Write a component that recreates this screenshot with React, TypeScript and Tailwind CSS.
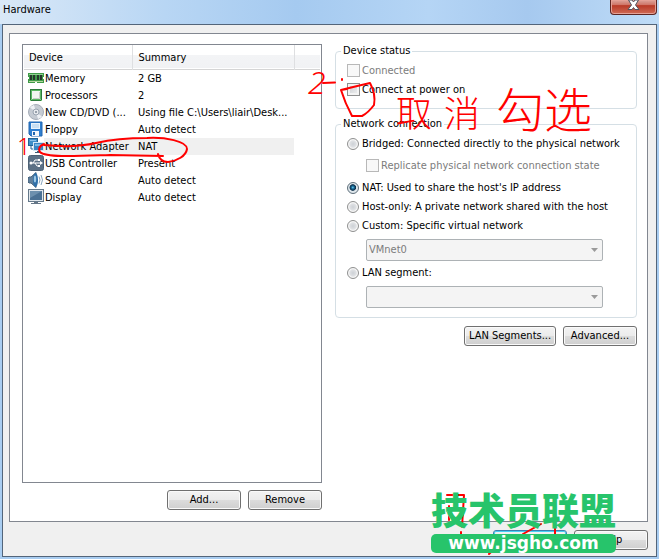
import type { ReactNode } from "react";

const devices = [
  { icon: <MemoryIcon />, name: "Memory", summary: "2 GB" },
  { icon: <ProcessorIcon />, name: "Processors", summary: "2" },
  { icon: <DiscIcon />, name: "New CD/DVD (...", summary: "Using file C:\\Users\\liair\\Desk..." },
  { icon: <FloppyIcon />, name: "Floppy", summary: "Auto detect" },
  { icon: <NetworkIcon />, name: "Network Adapter", summary: "NAT", selected: true },
  { icon: <UsbIcon />, name: "USB Controller", summary: "Present" },
  { icon: <SoundIcon />, name: "Sound Card", summary: "Auto detect" },
  { icon: <DisplayIcon />, name: "Display", summary: "Auto detect" },
];

function Icon({ children }: { children: ReactNode }) {
  return (
    <svg width="16" height="16" viewBox="0 0 16 16" className="shrink-0" aria-hidden="true">
      {children}
    </svg>
  );
}

function MemoryIcon() {
  return (
    <Icon>
      <path d="M0 3h16v10H0z" fill="#3f9a48" />
      <path d="M1 4h14v1H1z" fill="#8fd08f" />
      <path d="M2 5h2v5H2zM5 5h2v5H5zM9 5h2v5H9zM12 5h2v5h-2z" fill="#26372c" />
      <path d="M1 11h14v1H1z" fill="#b5d7a0" />
      <path d="M0 7h1v2H0zM15 7h1v2h-1zM7 12h2v1H7z" fill="#fff" />
    </Icon>
  );
}

function ProcessorIcon() {
  return (
    <Icon>
      <rect x="2.5" y="2.5" width="11" height="11" fill="#5cb866" stroke="#2c7a3c" />
      <rect x="4" y="4" width="8" height="8" fill="#f3f6f3" />
      <path d="M5 11.5h6.500V5" fill="none" stroke="#c9cfc9" />
      <path d="M2 14l2-2M14 14l-2-2" stroke="#7ecb83" />
    </Icon>
  );
}

function DiscIcon() {
  return (
    <Icon>
      <circle cx="8" cy="8" r="7.500" fill="#c5cbd3" stroke="#a5adb8" />
      <path d="M8 8L2 3.500A7.500 7.500 0 0 1 6 1zM8 8l6 4.500A7.500 7.500 0 0 1 10 15z" fill="#eef1f5" />
      <circle cx="8" cy="8" r="3" fill="#e7eaee" stroke="#9aa4b1" />
      <circle cx="8" cy="8" r="1" fill="#7d8794" />
    </Icon>
  );
}

function FloppyIcon() {
  return (
    <Icon>
      <path d="M1 1h13v14H3l-2-2z" fill="#2f7fd0" stroke="#2267b0" />
      <path d="M3 2h9v6H3z" fill="#e9f3fc" />
      <path d="M4 4h7M4 6h7" stroke="#a8cbe9" />
      <path d="M4 10h7v5H4z" fill="#f4f8fc" />
      <path d="M5 11h2v3H5z" fill="#2267b0" />
    </Icon>
  );
}

function NetworkIcon() {
  return (
    <Icon>
      <rect x="0.500" y="0.500" width="9" height="7" fill="#3f8fc8" stroke="#236395" />
      <path d="M2 2h6v1H2z" fill="#8ac2ea" />
      <path d="M3 8v3h2" fill="none" stroke="#236395" />
      <rect x="5.500" y="4.500" width="10" height="8" fill="#3a86c3" stroke="#d4e7f5" />
      <path d="M7 6h7v2H7z" fill="#78b7e4" />
      <path d="M9 13h3v1h2v1H7v-1h2z" fill="#3e5c76" />
    </Icon>
  );
}

function UsbIcon() {
  return (
    <Icon>
      <rect x="0.500" y="0.500" width="15" height="15" rx="2" fill="#5c7186" stroke="#4d6074" />
      <path d="M2 8h10M5 8l2-3h3M7 8l2 3h2" fill="none" stroke="#fff" />
      <circle cx="3" cy="8" r="1.500" fill="#fff" />
      <path d="M12 6l3 2-3 2zM10 4h2v2h-2zM10 10h2v2h-2z" fill="#fff" />
    </Icon>
  );
}

function SoundIcon() {
  return (
    <Icon>
      <path d="M1 5h2l5-4.500v15L3 11H1L0 10V6z" fill="#5f7f9c" stroke="#47637d" />
      <ellipse cx="7.500" cy="8" rx="2.500" ry="7" fill="#2f6fa8" />
      <ellipse cx="7" cy="7" rx="1.200" ry="3.500" fill="#9cc8e6" />
      <path d="M11 4.500q2 3.500 0 7M13 3q3 5 0 10" fill="none" stroke="#8ba7bf" />
    </Icon>
  );
}

function DisplayIcon() {
  return (
    <Icon>
      <rect x="0.500" y="0.500" width="15" height="12" fill="#e1e7ec" stroke="#65798b" />
      <rect x="2" y="2" width="12" height="9" fill="#4b7194" />
      <path d="M2 2h12L2 9z" fill="#6d90ae" />
      <path d="M6 13h4v1h3v1H3v-1h3z" fill="#647687" />
    </Icon>
  );
}

function PushButton({ children, wide, primary }: { children: ReactNode; wide?: boolean; primary?: boolean }) {
  return (
    <button
      type="button"
      className={`flex h-5 items-center justify-center rounded-[3px] border bg-[linear-gradient(#f3f3f3,#ebebeb_50%,#dcdcdc_50%,#cfcfcf)] ${
        wide ? "w-[92px]" : "w-[74px]"
      } ${
        primary
          ? "border-[#3c7fb1] shadow-[inset_0_0_0_1px_#49d0f5]"
          : "border-[#707070] shadow-[inset_0_0_0_1px_#fafafa]"
      }`}
    >
      {children}
    </button>
  );
}

function Check({ label, disabled }: { label: string; disabled?: boolean }) {
  return (
    <label className={`flex h-[13px] items-center gap-[2px] ${disabled ? "text-[#7c7c7c]" : ""}`}>
      <input
        type="checkbox"
        disabled={disabled}
        className={`size-[13px] shrink-0 appearance-none border ${
          disabled
            ? "border-[#b8b8b8] bg-[#f8f8f8]"
            : "border-[#8e8f8f] bg-[linear-gradient(135deg,#c5c9ce,#f4f4f4)] shadow-[inset_0_0_0_2px_#f4f4f4]"
        }`}
      />
      {label}
    </label>
  );
}

function Radio({ label, checked }: { label: string; checked?: boolean }) {
  return (
    <label className="flex h-[19px] items-center gap-[3px]">
      <input
        type="radio"
        name="connection"
        defaultChecked={checked}
        className="size-3 shrink-0 appearance-none rounded-full border border-[#8e8f8f] bg-[radial-gradient(circle,#cdd1d6_0,#dfe1e4_45%,#f6f6f6_60%)] checked:border-[#5e6e7a] checked:bg-[radial-gradient(circle_at_48%_45%,#6fd0f2_0,#176b98_18%,#0b2d48_38%,#dfe7ec_48%)]"
      />
      {label}
    </label>
  );
}

function NetworkSelect({ label, value }: { label: string; value: string }) {
  return (
    <div className="relative mt-1 mr-[33px] mb-[2px] ml-[19px]">
      <select
        aria-label={label}
        disabled
        className="block h-[22px] w-full appearance-none rounded-[2px] border border-[#adb2b5] bg-[#f4f4f4] px-[2px] text-[#7c7c7c] opacity-100"
      >
        <option>{value}</option>
      </select>
      <svg width="7" height="4" className="pointer-events-none absolute top-[9px] right-[5px]" aria-hidden="true">
        <path d="M0 0h7L3.500 4z" fill="#9a9a9a" />
      </svg>
    </div>
  );
}

function Group({ title, children }: { title: string; children: ReactNode }) {
  return (
    <fieldset className="min-w-0 rounded-[4px] border border-[#d5dfe5] pb-[7px] pl-[11px]">
      <legend className="-ml-[6px] px-[2px] leading-[14px]">{title}</legend>
      {children}
    </fieldset>
  );
}

function DeviceTable() {
  return (
    <div className="flex-1 border border-[#828790] bg-white px-px">
      <table className="w-full table-fixed border-collapse text-left">
        <thead>
          <tr className="h-6 border-b border-[#d5d5d5] bg-[linear-gradient(#fff_45%,#f3f4f6_45%,#f1f2f4)]">
            <th className="w-[108px] border-r border-[#dedfe1] pt-[3px] pl-[5px] font-normal">Device</th>
            <th className="border-r border-[#dedfe1] pt-[3px] pl-[6px] font-normal">Summary</th>
            <th className="w-[26px]" aria-label="Spacer" />
          </tr>
        </thead>
        <tbody>
          {devices.map((device) => (
            <tr key={device.name} className="h-[17px] leading-[17px] whitespace-nowrap">
              <td className="p-0 pl-1">
                <div className="flex h-[17px] items-center">
                  {device.icon}
                  <span className={`flex-1 pl-px ${device.selected ? "bg-[#f0f0f0]" : ""}`}>{device.name}</span>
                </div>
              </td>
              <td className={`p-0 pl-[6px] ${device.selected ? "bg-[#f0f0f0]" : ""}`}>{device.summary}</td>
              <td />
            </tr>
          ))}
        </tbody>
      </table>
    </div>
  );
}

// Red pen notes drawn over the dialog
function PenNotes() {
  return (
    <div className="pointer-events-none absolute inset-0 text-[#ff0000]">
      <svg
        width="659"
        height="559"
        viewBox="0 0 659 559"
        className="absolute top-0 left-0"
        fill="none"
        stroke="#ff0000"
        strokeWidth="2"
        strokeLinecap="round"
        strokeLinejoin="round"
        aria-hidden="true"
      >
        <path d="M44 145C64 147 83 146 96 143S127 138 147 138C165 137 187 141 187 149C186 156 177 161 168 162Q160 162 158 154M44 144Q37 147 40 152C46 158 80 156 110 155L163 156" />
        <path d="M323 83l12-0.500M342 79v1" />
        <path d="M341 90Q357 86 370 83Q376 94 374 105Q368 113 362 116H352Q345 103 341 90M341 90l6-1" />
        <path d="M447 495h17l-2 32M449 506v14M461 532v7M523 534l18-10M555 524v10M491 552l-2 2" />
      </svg>
      <span className="absolute top-[128px] left-[17px] font-['Noto_Sans'] text-[24px] leading-[36px] font-light">1</span>
      <span className="absolute top-[64px] left-[308px] font-['Noto_Sans'] text-[32px] leading-[36px] font-light italic">2</span>
      <div className="absolute top-[80px] left-[396px] flex items-end gap-4 font-['Noto_Sans_CJK_SC',sans-serif] font-light">
        <span className="flex gap-3 text-[36px] leading-[54px]">
          <span>取</span>
          <span>消</span>
        </span>
        <span className="mb-1 text-[48px] leading-[54px]">勾选</span>
      </div>
    </div>
  );
}

function Watermark() {
  return (
    <div className="pointer-events-none absolute right-[43px] bottom-[6px] flex flex-col items-center">
      <span className="mb-1 font-['Noto_Sans_CJK_SC',sans-serif] text-[37px] leading-[42px] font-black whitespace-nowrap text-[#27c46b]">
        技术员联盟
      </span>
      <span className="h-[19px] w-full rounded-[5px] bg-[#27c46b] text-center font-['DejaVu_Sans',sans-serif] text-[17px] leading-[18px] font-bold text-white">
        www.jsgho.com
      </span>
    </div>
  );
}

export default function App() {
  return (
    <div className="relative flex min-h-screen flex-col overflow-hidden bg-[#a9cdf1] px-[2px] pb-[2px] font-['DejaVu_Sans_Condensed','Open_Sans',sans-serif] text-[11px] leading-[14px] text-black">
      {/* Title bar */}
      <header className="-mx-[2px] flex h-6 items-start justify-between bg-[linear-gradient(90deg,#d9e8f7,#b8d6f4_25%,#a5caf0_45%,#b5d5f5_65%,#a6c9ef_80%,#bfdcf7)] pl-[3px]">
        <h1 className="pt-[3px]">Hardware</h1>
        <button
          type="button"
          aria-label="Close window"
          className="mr-[2px] flex h-[15px] w-[47px] items-start justify-center rounded-b-[4px] border border-t-0 border-[#5c2522] bg-[linear-gradient(#dda59c,#cf7466_35%,#b93a27_40%,#cf6b56)] shadow-[inset_0_0_0_1px_#e5a196]"
        >
          <svg width="13" height="11" viewBox="0 0 13 11" aria-hidden="true">
            <path d="M1.500 0h3.500l1.500 2L8 0h3.500L8.500 5l3.500 4.500H8L6.500 7.500 5 9.500H1L4.500 5z" fill="#fff" stroke="#53545f" />
          </svg>
        </button>
      </header>

      <main className="flex flex-1 flex-col border border-[#53657a] bg-[#f0f0f0] pt-2 pr-2 pb-[6px] pl-[6px]">
        <div className="flex flex-1 gap-[13px] border border-[#828790] bg-white pt-[10px] pr-[10px] pb-[11px] pl-3">
          <section className="flex min-w-0 flex-[150] flex-col">
            <DeviceTable />
            <div className="mt-[7px] flex justify-end gap-[7px]">
              <PushButton>Add...</PushButton>
              <PushButton>Remove</PushButton>
            </div>
          </section>

          <section className="flex min-w-0 flex-[151] flex-col gap-2">
            <Group title="Device status">
              <div className="flex flex-col gap-[6px] pt-[6px] pb-[5px]">
                <Check label="Connected" disabled />
                <Check label="Connect at power on" />
              </div>
            </Group>

            <Group title="Network connection">
              <div className="pt-[3px]">
                <Radio label="Bridged: Connected directly to the physical network" />
                <div className="flex h-[25px] items-center pl-[19px]">
                  <Check label="Replicate physical network connection state" disabled />
                </div>
                <Radio label="NAT: Used to share the host's IP address" checked />
                <Radio label="Host-only: A private network shared with the host" />
                <Radio label="Custom: Specific virtual network" />
                <NetworkSelect label="Virtual network" value="VMnet0" />
                <Radio label="LAN segment:" />
                <NetworkSelect label="LAN segment" value="" />
              </div>
            </Group>

            <div className="flex justify-end gap-[7px]">
              <PushButton wide>LAN Segments...</PushButton>
              <PushButton>Advanced...</PushButton>
            </div>
          </section>
        </div>

        <footer className="mt-2 flex justify-end gap-[7px]">
          <PushButton primary>Close</PushButton>
          <PushButton>Help</PushButton>
        </footer>
      </main>

      <PenNotes />
      <Watermark />
    </div>
  );
}
